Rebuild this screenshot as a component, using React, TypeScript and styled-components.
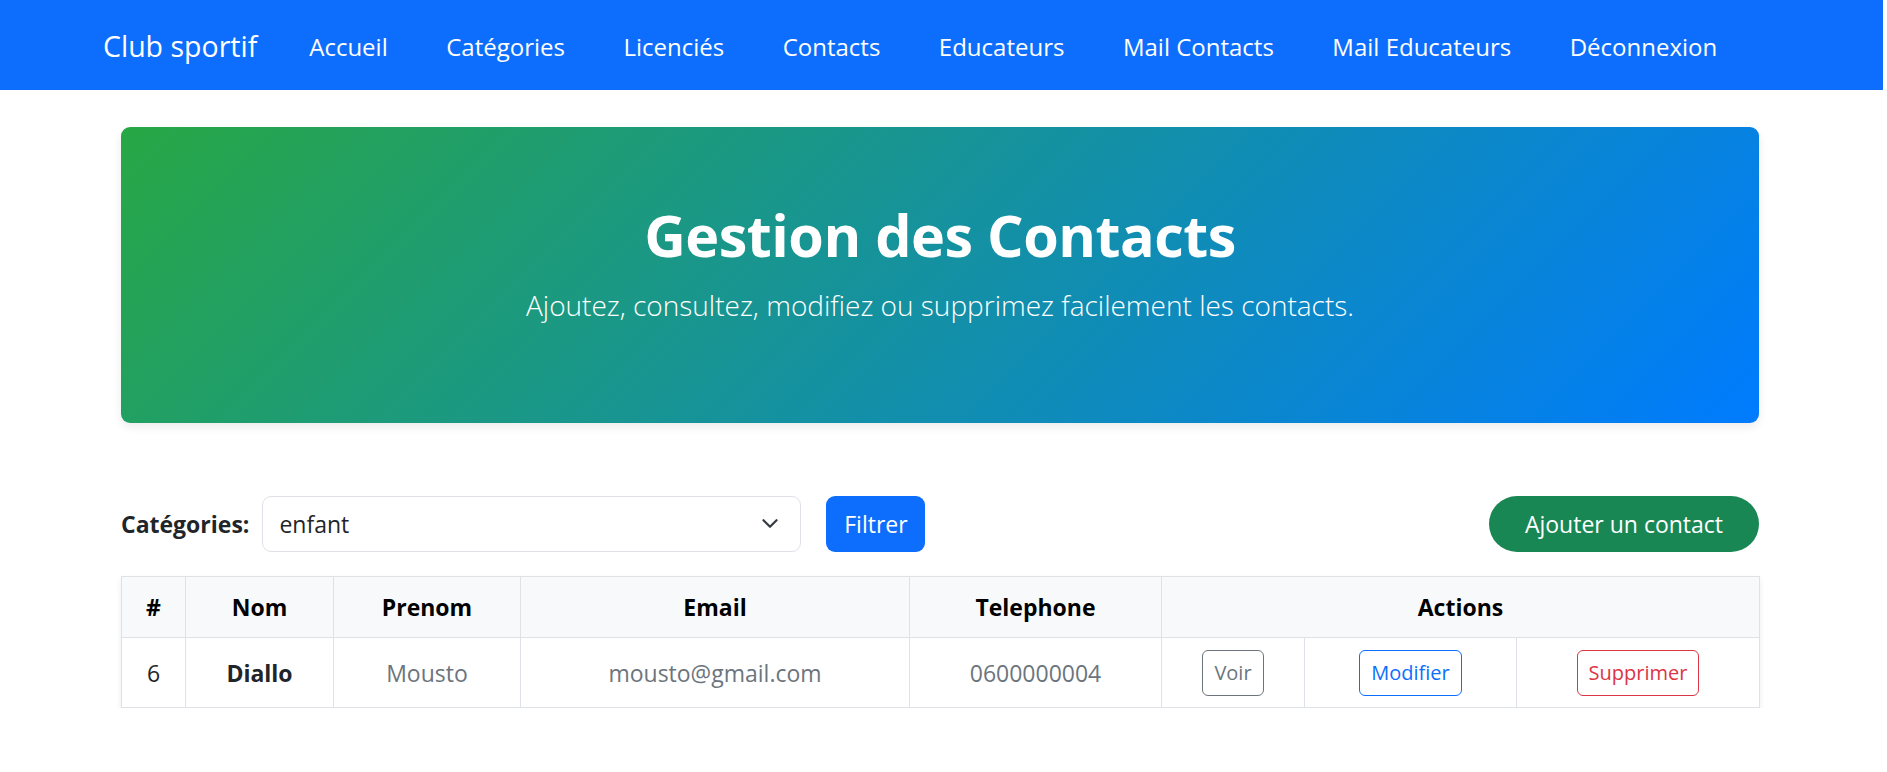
import React from "react";
import styled, { createGlobalStyle } from "styled-components";

const GlobalStyle = createGlobalStyle`
  html, body {
    margin: 0;
    padding: 0;
    background: #fff;
  }
  body {
    font-family: "Open Sans", "Noto Sans", sans-serif;
    color: #212529;
  }
  * {
    box-sizing: border-box;
  }
`;

const Navbar = styled.nav`
  height: 90px;
  background: #0d6efd;
  display: flex;
  align-items: center;
  padding-left: 103px;
  padding-top: 2px;
  margin-right: 4px;
`;

const Brand = styled.a`
  font-size: 28.5px;
  color: #fff;
  text-decoration: none;
  margin-right: 52px;
  white-space: nowrap;
`;

const NavLinks = styled.ul`
  display: flex;
  gap: 58.5px;
  list-style: none;
  margin: 0;
  padding: 0;
`;

const NavLink = styled.a`
  font-size: 24px;
  color: #fff;
  text-decoration: none;
  white-space: nowrap;
`;

const Container = styled.main`
  width: 1638px;
  margin: 37px auto 0 121px;
`;

const Hero = styled.section`
  height: 296px;
  border-radius: 9px;
  background: linear-gradient(135deg, #28a745, #007bff);
  box-shadow: 0 4px 10px rgba(0, 0, 0, 0.08);
  color: #fff;
  text-align: center;
  padding-top: 72px;
`;

const HeroTitle = styled.h1`
  margin: 0 0 12px;
  font-size: 57.5px;
  line-height: 72px;
  font-weight: 700;
  letter-spacing: -0.5px;
`;

const HeroLead = styled.p`
  margin: 0;
  font-size: 28px;
  line-height: 45px;
  font-weight: 300;
`;

const Toolbar = styled.div`
  margin-top: 73px;
  display: flex;
  align-items: center;
  justify-content: space-between;
`;

const FilterForm = styled.form`
  display: flex;
  align-items: center;
`;

const Label = styled.label`
  font-size: 23px;
  font-weight: 700;
  margin-right: 13px;
`;

const SelectBox = styled.div`
  width: 539px;
  height: 56px;
  border: 1px solid #dee2e6;
  border-radius: 9px;
  display: flex;
  align-items: center;
  justify-content: space-between;
  padding: 0 21px 0 16px;
  font-size: 23px;
  color: #212529;
`;

const Button = styled.button<{ $bg: string; $pill?: boolean; $w: number }>`
  height: 56px;
  width: ${(p) => p.$w}px;
  border: none;
  border-radius: ${(p) => (p.$pill ? "28px" : "9px")};
  background: ${(p) => p.$bg};
  color: #fff;
  font-family: inherit;
  font-size: 23px;
  padding: 0;
`;

const FilterButton = styled(Button)`
  margin-left: 25px;
`;

const Table = styled.table`
  margin-top: 24px;
  width: 100%;
  border-collapse: collapse;
  table-layout: fixed;
  box-shadow: 0 3px 6px rgba(0, 0, 0, 0.075);
  font-size: 23px;
`;

const Th = styled.th`
  height: 61px;
  background: #f8f9fa;
  border: 1px solid #dee2e6;
  color: #000;
  font-weight: 700;
  text-align: center;
`;

const Td = styled.td<{ $tone?: "muted" | "strong" }>`
  height: 70px;
  border: 1px solid #dee2e6;
  text-align: center;
  color: ${(p) => (p.$tone === "muted" ? "#6c757d" : "#212529")};
  font-weight: ${(p) => (p.$tone === "strong" ? 700 : 400)};
`;

const ActionButton = styled.button<{ $color: string }>`
  height: 46px;
  padding: 0 11px;
  border: 1.5px solid ${(p) => p.$color};
  border-radius: 6px;
  background: #fff;
  color: ${(p) => p.$color};
  font-family: inherit;
  font-size: 20px;
`;

const Chevron = () => (
  <svg width="18" height="12" viewBox="0 0 16 11" fill="none">
    <path d="M2 2l6 6 6-6" stroke="#343a40" strokeWidth="2" strokeLinecap="round" strokeLinejoin="round" />
  </svg>
);

const links = ["Accueil", "Catégories", "Licenciés", "Contacts", "Educateurs", "Mail Contacts", "Mail Educateurs", "Déconnexion"];

export default function App() {
  return (
    <>
      <GlobalStyle />
      <Navbar>
        <Brand href="#">Club sportif</Brand>
        <NavLinks>
          {links.map((l) => (
            <li key={l}>
              <NavLink href="#">{l}</NavLink>
            </li>
          ))}
        </NavLinks>
      </Navbar>
      <Container>
        <Hero>
          <HeroTitle>Gestion des Contacts</HeroTitle>
          <HeroLead>Ajoutez, consultez, modifiez ou supprimez facilement les contacts.</HeroLead>
        </Hero>

        <Toolbar>
          <FilterForm>
            <Label>Catégories:</Label>
            <SelectBox>
              <span>enfant</span>
              <Chevron />
            </SelectBox>
            <FilterButton type="button" $bg="#0d6efd" $w={99}>Filtrer</FilterButton>
          </FilterForm>
          <Button type="button" $bg="#198754" $pill $w={270}>Ajouter un contact</Button>
        </Toolbar>

        <Table>
          <colgroup>
            <col style={{ width: 64 }} />
            <col style={{ width: 148 }} />
            <col style={{ width: 187 }} />
            <col style={{ width: 389 }} />
            <col style={{ width: 252 }} />
            <col style={{ width: 143 }} />
            <col style={{ width: 212 }} />
            <col style={{ width: 243 }} />
          </colgroup>
          <thead>
            <tr>
              <Th>#</Th>
              <Th>Nom</Th>
              <Th>Prenom</Th>
              <Th>Email</Th>
              <Th>Telephone</Th>
              <Th colSpan={3}>Actions</Th>
            </tr>
          </thead>
          <tbody>
            <tr>
              <Td>6</Td>
              <Td $tone="strong">Diallo</Td>
              <Td $tone="muted">Mousto</Td>
              <Td $tone="muted">mousto@gmail.com</Td>
              <Td $tone="muted">0600000004</Td>
              <Td><ActionButton $color="#6c757d">Voir</ActionButton></Td>
              <Td><ActionButton $color="#0d6efd">Modifier</ActionButton></Td>
              <Td><ActionButton $color="#dc3545">Supprimer</ActionButton></Td>
            </tr>
          </tbody>
        </Table>
      </Container>
    </>
  );
}
